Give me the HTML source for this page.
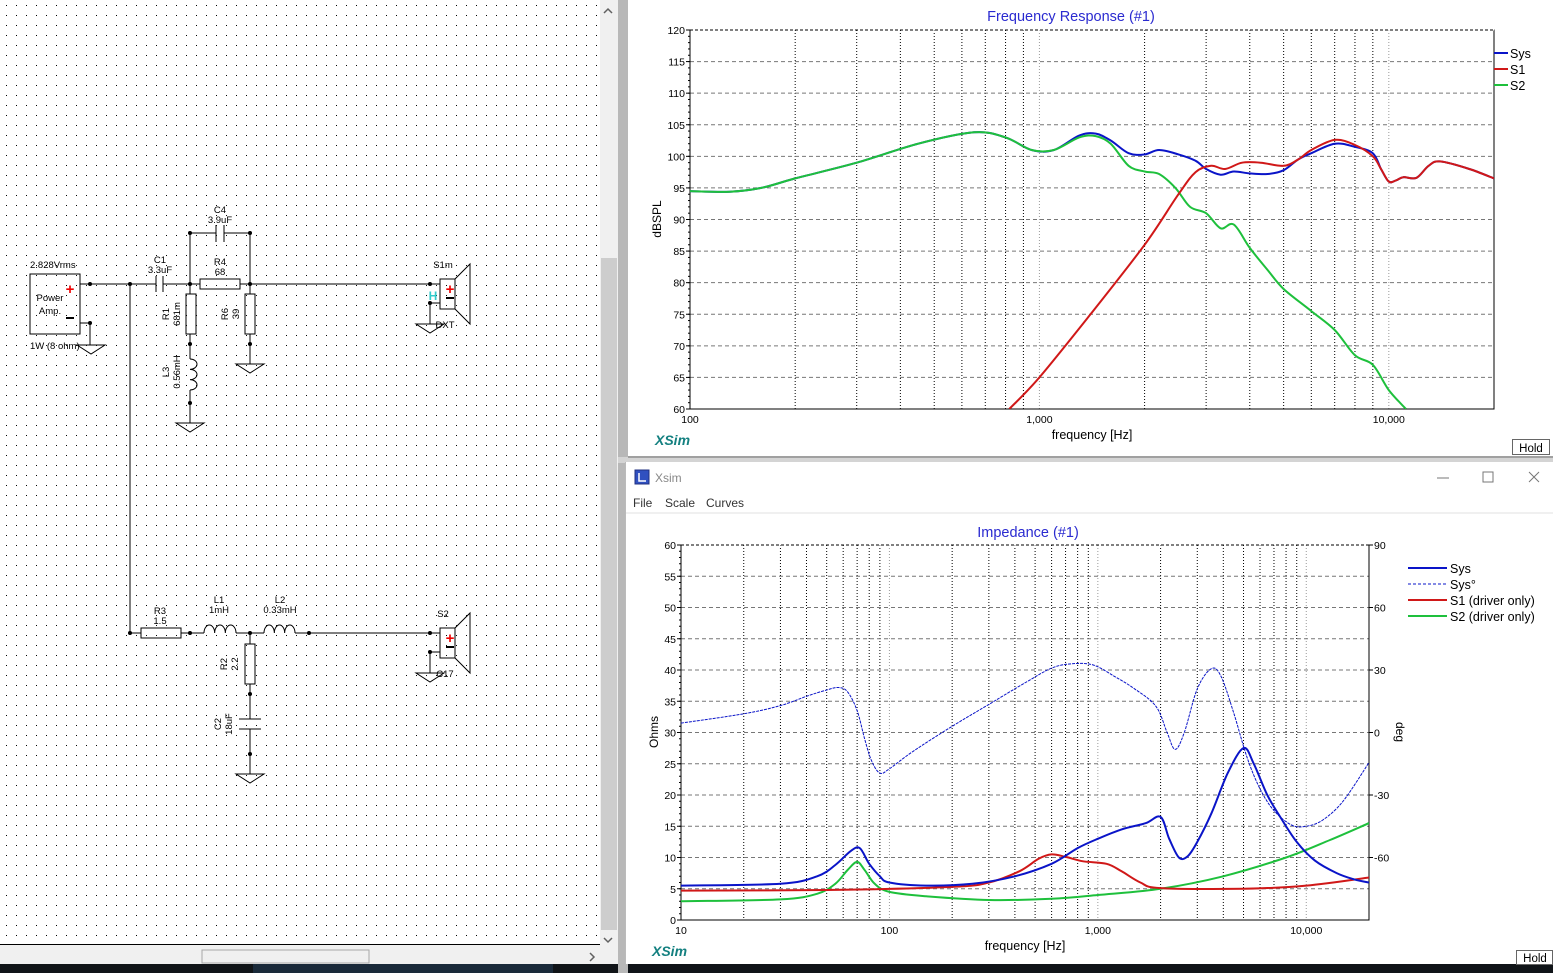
<!DOCTYPE html>
<html><head><meta charset="utf-8"><style>
body{margin:0;width:1553px;height:973px;overflow:hidden;background:#fff;font-family:"Liberation Sans",sans-serif;position:relative}
.abs{position:absolute}
svg text{font-family:"Liberation Sans",sans-serif}
</style></head><body>
<svg class="abs" style="left:0;top:0" width="1553" height="973" id="s">
<defs>
<pattern id="dots" x="6" y="5" width="10" height="10" patternUnits="userSpaceOnUse"><rect width="1" height="1" fill="#000"/></pattern>
</defs>
<rect x="0" y="0" width="600" height="945" fill="#fff"/>
<rect x="0" y="0" width="600" height="945" fill="url(#dots)"/>
<rect x="600" y="0" width="18" height="945" fill="#f0f0f0"/>
<rect x="601" y="258" width="16" height="672" fill="#cdcdcd"/>
<path d="M604 13l4-4 4 4" stroke="#606060" stroke-width="1.5" fill="none"/>
<path d="M604 938l4 4 4-4" stroke="#606060" stroke-width="1.5" fill="none"/>
<rect x="0" y="944" width="600" height="1" fill="#000"/>
<rect x="0" y="945" width="618" height="19" fill="#f0f0f0"/>
<rect x="202" y="950" width="167" height="13" fill="#f0f0f0" stroke="#a8a8a8"/>
<path d="M590 953l4 4-4 4" stroke="#606060" stroke-width="1.5" fill="none"/>
<rect x="0" y="964" width="1553" height="9" fill="#101418"/>
<rect x="253" y="964" width="300" height="9" fill="#1a2a3a"/>
<rect x="618" y="0" width="10" height="973" fill="#b8b8b8"/>
<rect x="621" y="0" width="1" height="973" fill="url(#dots)"/>
<rect x="618" y="457" width="935" height="6" fill="#d4d4d4"/>
<rect x="628" y="0" width="925" height="457" fill="#fff"/>
<rect x="628" y="456" width="925" height="2" fill="#a0a0a0"/>
<rect x="625" y="462" width="928" height="502" fill="#fff"/>
<rect x="625" y="462" width="1" height="502" fill="#bbb"/>
<rect x="626" y="512" width="927" height="2" fill="#f0f0f0"/>
<rect x="635" y="470" width="14" height="14" fill="#3050c0" stroke="#203080"/>
<path d="M639 473v8h7" stroke="#fff" stroke-width="1.5" fill="none"/>
<text x="655" y="482" font-size="12" fill="#888">Xsim</text>
<path d="M1437 478h12" stroke="#777"/>
<rect x="1483" y="472" width="10" height="10" fill="none" stroke="#777"/>
<path d="M1529 472l10 10M1539 472l-10 10" stroke="#777"/>
<text x="633" y="507" font-size="12" fill="#333">File</text>
<text x="665" y="507" font-size="12" fill="#333">Scale</text>
<text x="706" y="507" font-size="12" fill="#333">Curves</text>
<g id="sch" stroke="#000" fill="none" stroke-width="1"></g>
<g id="top"></g>
<g id="bot"></g>
</svg>
<script>
const NS="http://www.w3.org/2000/svg";
function el(p,t,a,txt){const e=document.createElementNS(NS,t);for(const k in a)e.setAttribute(k,a[k]);if(txt!=null)e.textContent=txt;p.appendChild(e);return e;}
const S=document.getElementById('s');
const g=document.getElementById('sch');
function L(d){el(g,'path',{d:d});}
function dot(x,y){el(g,'circle',{cx:x,cy:y,r:2,fill:'#000',stroke:'none'});}
function gnd(x,y){el(g,'path',{d:`M${x} ${y-20}V${y}M${x-14} ${y}h28l-14 9z`});}
function T(x,y,s,opt){opt=opt||{};const e=el(S,'text',Object.assign({x:x,y:y,'font-size':opt.fs||10,fill:opt.fill||'#000','text-anchor':opt.a||'middle'},opt.tr?{transform:opt.tr}:{}),s);if(opt.fw)e.setAttribute('font-weight',opt.fw);}
function coilV(x,y1,y2){let d=`M${x} ${y1}`;const n=3,h=(y2-y1)/n;for(let i=0;i<n;i++){d+=` a7 ${h/2} 0 0 1 0 ${h}`}L(d);}
function coilH(x1,x2,y){let d=`M${x1} ${y}`;const n=3,w=(x2-x1)/n;for(let i=0;i<n;i++){d+=` a${w/2} 8 0 0 1 ${w} 0`}L(d);}
el(g,'rect',{x:30,y:274,width:50,height:60});
T(30,268,'2.828Vrms',{a:'start',fs:9.5});
T(70,294,'+',{fill:'#e00',fs:15,fw:'bold'});
el(g,'path',{d:'M66 318h8',stroke:'#000','stroke-width':2});
T(50,301,'Power',{fs:9.5});T(50,314,'Amp.',{fs:9.5});
T(30,349,'1W (8 ohm)',{a:'start',fs:9.5});
L('M80 284H156M163 284H200M240 284H430');
dot(90,284);dot(130,284);dot(190,284);dot(250,284);dot(430,284);
L('M80 323H90V345');dot(90,323);el(g,'path',{d:'M77 345h28l-14 9z'});
L('M156 276v16M163 276v16');
T(160,263,'C1',{fs:9.5});T(160,273,'3.3uF',{fs:9.5});
L('M190 284V233H216M224 233H250V284');dot(190,233);dot(250,233);
L('M216 225v17M224 225v17');T(220,213,'C4',{fs:9.5});T(220,223,'3.9uF',{fs:9.5});
el(g,'rect',{x:200,y:279,width:40,height:10});T(220,265,'R4',{fs:9.5});T(220,275,'68',{fs:9.5});
el(g,'rect',{x:186,y:294,width:10,height:40});L('M190 284v10M190 334V359');dot(190,344);
coilV(190,359,390);L('M190 390V423');dot(190,403);gnd(190,423);
T(169,314,'R1',{fs:9.5,tr:'rotate(-90 169 314)'});T(180,314,'681m',{fs:9.5,tr:'rotate(-90 180 314)'});
T(169,372,'L3',{fs:9.5,tr:'rotate(-90 169 372)'});T(180,372,'0.56mH',{fs:9.5,tr:'rotate(-90 180 372)'});
el(g,'rect',{x:245,y:294,width:10,height:40});L('M250 284v10M250 334V364');dot(250,344);gnd(250,364);
T(228,314,'R6',{fs:9.5,tr:'rotate(-90 228 314)'});T(239,314,'39',{fs:9.5,tr:'rotate(-90 239 314)'});
function spk(x,yt,lab,sub,h){el(g,'rect',{x:440,y:yt,width:15,height:30});L(`M430 ${yt+5}H440M455 ${yt}L470 ${yt-15}V${yt+45}L455 ${yt+30}`);
T(450,yt+15,'+',{fill:'#e00',fs:15,fw:'bold'});el(g,'path',{d:`M446 ${yt+19}h8`,stroke:'#000','stroke-width':2});
L(`M440 ${yt+24}H430V${yt+45}`);dot(430,yt+24);el(g,'path',{d:`M416 ${yt+45}h28l-14 9z`});
T(443,yt-11,lab,{fs:9.5});T(445,yt+49,sub,{fs:9.5});if(h)T(433,yt+21,'H',{fill:'#3cc',fs:12,fw:'bold'});}
spk(440,279,'S1m','DXT',true);
L('M130 284V633H141');dot(130,633);
el(g,'rect',{x:141,y:628,width:40,height:10});T(160,614,'R3',{fs:9.5});T(160,624,'1.5',{fs:9.5});
L('M181 633H204');dot(190,633);coilH(204,236,633);L('M236 633H264');dot(250,633);coilH(264,295,633);L('M295 633H440');dot(309,633);dot(430,633);
T(219,603,'L1',{fs:9.5});T(219,613,'1mH',{fs:9.5});T(280,603,'L2',{fs:9.5});T(280,613,'0.33mH',{fs:9.5});
spk(440,628,'S2','C17',false);
el(g,'rect',{x:245,y:644,width:10,height:40});L('M250 633v11M250 684V719M239 719h22M239 729h22M250 729V774');dot(250,694);dot(250,754);gnd(250,774);
T(227,664,'R2',{fs:9.5,tr:'rotate(-90 227 664)'});T(238,664,'2.2',{fs:9.5,tr:'rotate(-90 238 664)'});
T(221,724,'C2',{fs:9.5,tr:'rotate(-90 221 724)'});T(232,724,'18uF',{fs:9.5,tr:'rotate(-90 232 724)'});

function smooth(P){let d=`M${P[0][0].toFixed(1)} ${P[0][1].toFixed(1)}`;
 for(let i=0;i<P.length-1;i++){const p0=P[Math.max(i-1,0)],p1=P[i],p2=P[i+1],p3=P[Math.min(i+2,P.length-1)];
  const c1=[p1[0]+(p2[0]-p0[0])/6,p1[1]+(p2[1]-p0[1])/6],c2=[p2[0]-(p3[0]-p1[0])/6,p2[1]-(p3[1]-p1[1])/6];
  d+=` C${c1[0].toFixed(1)} ${c1[1].toFixed(1)} ${c2[0].toFixed(1)} ${c2[1].toFixed(1)} ${p2[0].toFixed(1)} ${p2[1].toFixed(1)}`;}
 return d;}
function chart(G,o){
 const {x0,x1,y0,y1,f0,f1,v0,v1}=o;
 const X=f=>x0+(Math.log10(f)-Math.log10(f0))/(Math.log10(f1)-Math.log10(f0))*(x1-x0);
 const Y=v=>y1-(v-v0)/(v1-v0)*(y1-y0);
 for(let d=Math.pow(10,Math.floor(Math.log10(f0)));d<f1;d*=10){for(let k=1;k<10;k++){const f=d*k;if(f<=f0||f>=f1)continue;el(G,'line',{x1:X(f),x2:X(f),y1:y0,y2:y1,stroke:k==1?'#999':'#000','stroke-dasharray':'1 2'});}}
 for(let v=v0;v<=v1;v+=o.step){el(G,'line',{x1:x0,x2:x1,y1:Y(v),y2:Y(v),stroke:'#777','stroke-dasharray':'4 3'});
  el(G,'line',{x1:x0-4,x2:x0,y1:Y(v),y2:Y(v),stroke:'#000'});
  el(G,'text',{x:x0-5,y:Y(v)+4,'font-size':10.5,'text-anchor':'end'},String(v));}
 for(let v=v0;v<v1;v+=1){el(G,'line',{x1:x0-2,x2:x0,y1:Y(v),y2:Y(v),stroke:'#000'});}
 el(G,'rect',{x:x0,y:y0,width:x1-x0,height:y1-y0,fill:'none',stroke:'#000'});
 el(G,'line',{x1:x0,x2:x1,y1:y0,y2:y0,stroke:'#fff'});el(G,'line',{x1:x0,x2:x1,y1:y0,y2:y0,stroke:'#000','stroke-dasharray':'3 2'});
 o.xl.forEach(([f,s])=>el(G,'text',{x:X(f),y:y1+14,'font-size':10.5,'text-anchor':'middle'},s));
 const cp=el(G,'clipPath',{id:'c'+o.id});el(cp,'rect',{x:x0,y:y0,width:x1-x0,height:y1-y0});
 o.curves.forEach(c=>{el(G,'path',{d:smooth(c.p.map(([f,v])=>[X(f),Y(v)])),fill:'none',stroke:c.c,'stroke-width':c.w||2,'stroke-dasharray':c.d||'none','stroke-linejoin':'round','clip-path':`url(#c${o.id})`});});
}
const green=[[100,94.5],[130,94.4],[160,95],[200,96.5],[300,99],[450,102],[650,103.8],[800,103],[950,101],[1100,101],[1300,103],[1450,103.2],[1600,102],[1800,98.5],[2000,97.6],[2200,97.2],[2450,95],[2700,92],[3000,91],[3300,88.6],[3600,89.2],[4000,85.5],[4500,82],[5000,79],[6000,75.5],[7000,72.5],[8000,68.5],[9000,67],[10000,63],[11200,60]];
const red=[[820,60],[1000,65],[1400,75],[2000,86],[2500,94],[2800,97.5],[3100,98.5],[3400,98],[3800,99],[4300,99],[5000,98.5],[5500,99.5],[6000,101],[7000,102.6],[8000,101.8],[9000,100],[9500,98],[10000,96],[10500,96.2],[11000,96.7],[12000,96.6],[13000,98.5],[14000,99.2],[17000,98],[20000,96.5]];
const blue=green.filter(p=>p[0]<=1100).concat([[1300,103.3],[1450,103.6],[1600,102.5],[1800,100.5],[2000,100.3],[2200,101],[2500,100.3],[2800,99.3],[3000,98],[3300,97.1],[3600,97.6],[4000,97.3],[4500,97.2],[5000,97.8],[5500,99.5],[6000,100.5],[7000,102],[8000,101.5],[9000,100.5]]).concat(red.filter(p=>p[0]>=9500));
const TG=document.getElementById('top');
chart(TG,{id:1,x0:690,x1:1494,y0:30,y1:409,f0:100,f1:20000,v0:60,v1:120,step:5,
 xl:[[100,'100'],[1000,'1,000'],[10000,'10,000']],
 curves:[{p:blue,c:'#0a14c8'},{p:green,c:'#1ec03c'},{p:red,c:'#d01818'}]});
el(TG,'text',{x:1071,y:21,'font-size':14.5,fill:'#2a2ad0','text-anchor':'middle'},'Frequency Response (#1)');
el(TG,'text',{x:661,y:219,'font-size':12,transform:'rotate(-90 661 219)','text-anchor':'middle'},'dBSPL');
el(TG,'text',{x:1092,y:439,'font-size':12.5,'text-anchor':'middle'},'frequency [Hz]');
el(TG,'text',{x:655,y:445,'font-size':14,fill:'#148080','font-weight':'bold','font-style':'italic'},'XSim');
[['Sys','#0a14c8',53],['S1','#d01818',69],['S2','#1ec03c',85]].forEach(([n,c,y])=>{el(TG,'line',{x1:1494,x2:1508,y1:y,y2:y,stroke:c,'stroke-width':2});el(TG,'text',{x:1510,y:y+5,'font-size':12.5},n);});
el(TG,'rect',{x:1512.5,y:439.5,width:37,height:15,fill:'#fff',stroke:'#666'});el(TG,'text',{x:1531,y:452,'font-size':11.5,'text-anchor':'middle'},'Hold');

const bblue=[[10,5.5],[30,5.8],[45,7],[55,8.8],[65,11],[72,11.5],[80,9],[90,7],[100,6],[150,5.5],[250,5.8],[400,7],[600,9],[800,11.5],[1000,13],[1300,14.5],[1700,15.5],[2000,16.5],[2200,13],[2450,10],[2700,10.2],[3000,12.5],[3500,17],[4200,23.5],[5000,27.5],[5600,25],[6500,20],[7500,16.5],[9000,12.5],[11000,9.5],[14000,7.5],[17000,6.5],[20000,6]];
const bph=[[10,31.5],[20,33],[30,34.3],[40,35.8],[50,36.8],[57,37.2],[63,36.5],[70,33.5],[76,29],[82,25.5],[90,23.5],[100,24.2],[130,27],[200,31],[300,34.5],[450,38],[600,40.3],[750,41],[950,40.8],[1200,39],[1500,37],[1900,34.2],[2150,30],[2350,27.3],[2600,30],[3000,37],[3500,40.2],[3900,39],[4500,33],[5200,26],[6000,21],[7000,17.5],[8500,15.2],[10000,15],[12000,16],[15000,19],[20000,25.2]];
const bred=[[10,4.7],[50,4.8],[200,5.3],[300,6],[420,7.8],[520,9.8],[600,10.5],[700,10.1],[850,9.4],[1100,9],[1300,7.8],[1600,6],[2000,5.1],[5000,5],[10000,5.5],[20000,6.8]];
const bgreen=[[10,3],[30,3.3],[45,4.2],[55,5.8],[63,8],[70,9.3],[76,8],[85,5.8],[100,4.5],[150,3.8],[300,3.2],[600,3.4],[1000,4],[2000,5],[4000,7],[8000,10],[13000,12.8],[20000,15.5]];
const BG=document.getElementById('bot');
chart(BG,{id:2,x0:681,x1:1369,y0:545,y1:920,f0:10,f1:20000,v0:0,v1:60,step:5,
 xl:[[10,'10'],[100,'100'],[1000,'1,000'],[10000,'10,000']],
 curves:[{p:bph,c:'#0a14c8',w:1,d:'3 1'},{p:bgreen,c:'#1ec03c'},{p:bred,c:'#d01818'},{p:bblue,c:'#0a14c8'}]});
[[90,545],[60,607.5],[30,670],[0,732.5],[-30,795],[-60,857.5]].forEach(([d,y])=>{el(BG,'line',{x1:1369,x2:1373,y1:y,y2:y,stroke:'#000'});el(BG,'text',{x:1374,y:y+4,'font-size':10.5},String(d));});
el(BG,'text',{x:1028,y:537,'font-size':14.5,fill:'#2a2ad0','text-anchor':'middle'},'Impedance (#1)');
el(BG,'text',{x:658,y:732,'font-size':12,transform:'rotate(-90 658 732)','text-anchor':'middle'},'Ohms');
el(BG,'text',{x:1396,y:732,'font-size':12,transform:'rotate(90 1396 732)','text-anchor':'middle'},'deg');
el(BG,'text',{x:1025,y:950,'font-size':12.5,'text-anchor':'middle'},'frequency [Hz]');
el(BG,'text',{x:652,y:956,'font-size':14,fill:'#148080','font-weight':'bold','font-style':'italic'},'XSim');
[['Sys','#0a14c8',568,''],['Sys°','#0a14c8',584,'3 2'],['S1 (driver only)','#d01818',600,''],['S2 (driver only)','#1ec03c',616,'']].forEach(([n,c,y,d])=>{el(BG,'line',{x1:1408,x2:1447,y1:y,y2:y,stroke:c,'stroke-width':d?1:2,'stroke-dasharray':d||'none'});el(BG,'text',{x:1450,y:y+5,'font-size':12.5},n);});
el(BG,'rect',{x:1516.5,y:950.5,width:36,height:14,fill:'#fff',stroke:'#666'});el(BG,'text',{x:1535,y:962,'font-size':11.5,'text-anchor':'middle'},'Hold');
</script>
</body></html>
